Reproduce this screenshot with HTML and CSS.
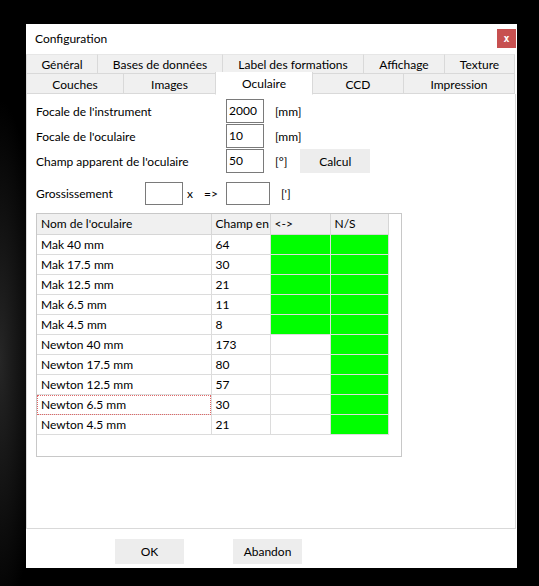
FILE: index.html
```html
<!DOCTYPE html>
<html>
<head>
    <title>Configuration</title>
    <link rel="stylesheet" href="styles.css">
</head>
<body>
    <div class="window">
        <div class="titlebar">
            <span class="title">Configuration</span>
            <span class="close">x</span>
        </div>

        <div class="tabs">
            <div class="tab-row row-top">
                <div class="tab">Général</div>
                <div class="tab">Bases de données</div>
                <div class="tab">Label des formations</div>
                <div class="tab">Affichage</div>
                <div class="tab">Texture</div>
            </div>
            <div class="tab-row row-bottom">
                <div class="tab">Couches</div>
                <div class="tab">Images</div>
                <div class="tab active">Oculaire</div>
                <div class="tab">CCD</div>
                <div class="tab">Impression</div>
            </div>
        </div>

        <div class="panel">
            <div class="fields">
                <div class="field">
                    <span class="label">Focale de l'instrument</span>
                    <span class="box">2000</span>
                    <span class="unit">[mm]</span>
                </div>
                <div class="field">
                    <span class="label">Focale de l'oculaire</span>
                    <span class="box">10</span>
                    <span class="unit">[mm]</span>
                </div>
                <div class="field">
                    <span class="label">Champ apparent de l'oculaire</span>
                    <span class="box">50</span>
                    <span class="unit">[°]</span>
                    <span class="btn calc">Calcul</span>
                </div>
            </div>

            <div class="zoom-row">
                <span class="zoom-label">Grossissement</span>
                <span class="box"></span>
                <span class="times">x</span>
                <span class="arrow">=&gt;</span>
                <span class="box wide"></span>
                <span class="unit">[']</span>
            </div>

            <div class="grid">
                <table>
                    <colgroup>
                        <col class="c-name">
                        <col class="c-field">
                        <col class="c-flip">
                        <col class="c-ns">
                    </colgroup>
                    <thead>
                        <tr><th>Nom de l'oculaire</th><th>Champ en</th><th>&lt;-&gt;</th><th>N/S</th></tr>
                    </thead>
                    <tbody>
                        <tr><td>Mak 40 mm</td><td>64</td><td class="on"></td><td class="on"></td></tr>
                        <tr><td>Mak 17.5 mm</td><td>30</td><td class="on"></td><td class="on"></td></tr>
                        <tr><td>Mak 12.5 mm</td><td>21</td><td class="on"></td><td class="on"></td></tr>
                        <tr><td>Mak 6.5 mm</td><td>11</td><td class="on"></td><td class="on"></td></tr>
                        <tr><td>Mak 4.5 mm</td><td>8</td><td class="on"></td><td class="on"></td></tr>
                        <tr><td>Newton 40 mm</td><td>173</td><td></td><td class="on"></td></tr>
                        <tr><td>Newton 17.5 mm</td><td>80</td><td></td><td class="on"></td></tr>
                        <tr><td>Newton 12.5 mm</td><td>57</td><td></td><td class="on"></td></tr>
                        <tr><td class="focus">Newton 6.5 mm</td><td>30</td><td></td><td class="on"></td></tr>
                        <tr><td>Newton 4.5 mm</td><td>21</td><td></td><td class="on"></td></tr>
                    </tbody>
                </table>
            </div>
        </div>

        <div class="footer">
            <span class="btn ok">OK</span>
            <span class="btn cancel">Abandon</span>
        </div>
    </div>
</body>
</html>
```

FILE: styles.css
```css
body {
    margin: 0;
    padding: 24px 0 0 26px;
    height: 586px;
    box-sizing: border-box;
    background-color: #000;
    background-image: radial-gradient(ellipse 40px 260px at 0 360px, #262626, rgba(0, 0, 0, 0));
    font-family: Lato, "Noto Sans", sans-serif;
    font-size: 12px;
    color: #000;
    overflow: hidden;
}

.window {
    width: 491px;
    height: 544px;
    background-color: #fff;
    display: flex;
    flex-direction: column;
}

/* title bar */
.titlebar {
    height: 30px;
    display: flex;
    align-items: center;
    justify-content: space-between;
    padding: 0 1px 0 9px;
}

.title {
    font-size: 12px;
    margin-top: -2px;
}

.close {
    width: 19px;
    height: 19px;
    margin-top: -2px;
    background-color: #c75050;
    color: #fff;
    font-family: "DejaVu Sans Mono", monospace;
    font-size: 10px;
    font-weight: bold;
    display: flex;
    align-items: center;
    justify-content: center;
}

/* tabs */
.tab-row {
    display: grid;
    height: 20px;
}

.row-top {
    grid-template-columns: 72px 125px 141px 81px 70px;
}

.row-bottom {
    grid-template-columns: 98px 92px 97px 91px 111px;
}

.tab {
    box-sizing: border-box;
    height: 20px;
    padding-top: 2px;
    background-color: #f0f0f0;
    border-right: 1px solid #d9d9d9;
    border-bottom: 1px solid #d9d9d9;
    display: flex;
    align-items: center;
    justify-content: center;
    line-height: 1;
}

.row-top .tab {
    border-top: 1px solid #e6e6e6;
}

.tab:first-child {
    border-left: 1px solid #d9d9d9;
}

.tab.active {
    position: relative;
    z-index: 1;
    background-color: #fff;
    border-bottom-color: #fff;
    border-left: 1px solid #d9d9d9;
    margin-left: -1px;
    margin-top: -2px;
    height: 23px;
    align-items: flex-start;
    padding-top: 6px;
}

/* page content */
.panel {
    box-sizing: border-box;
    height: 435px;
    border: 1px solid #d9d9d9;
    border-top: none;
    margin-right: 1px;
    padding: 5px 0 0 9px;
}

.fields {
    display: flex;
    flex-direction: column;
    gap: 1px;
}

.field,
.zoom-row {
    display: flex;
    align-items: center;
    height: 24px;
}

.label {
    width: 190px;
}

.box {
    box-sizing: border-box;
    width: 38px;
    height: 24px;
    border: 1px solid #7a7a7a;
    padding: 3px 0 0 2px;
    background-color: #fff;
}

.box.wide {
    width: 44px;
}

.unit {
    margin-left: 11px;
}

.btn {
    box-sizing: border-box;
    width: 70px;
    height: 24px;
    background-color: #ededed;
    display: flex;
    align-items: center;
    justify-content: center;
}

.calc {
    margin-left: 13px;
}

.zoom-row {
    margin-top: 9px;
    height: 23px;
}

.zoom-row .box {
    height: 23px;
}

.zoom-label {
    width: 109px;
}

.times {
    margin-left: 4px;
}

.arrow {
    margin-left: 11px;
    margin-right: 8px;
}

/* eyepiece list */
.grid {
    box-sizing: border-box;
    width: 366px;
    height: 244px;
    margin-top: 8px;
    border: 1px solid #c8c8c8;
}

table {
    border-collapse: collapse;
    table-layout: fixed;
    width: 351px;
}

.c-name { width: 174px; }
.c-field { width: 59px; }
.c-flip { width: 60px; }
.c-ns { width: 58px; }

th,
td {
    height: 19px;
    padding: 0 3px 0 4px;
    border: 1px solid #dcdcdc;
    text-align: left;
    font-weight: normal;
    white-space: nowrap;
    overflow: hidden;
    line-height: 1;
}

th {
    background-color: #f0f0f0;
    border-color: #d6d6d6;
}

tr > :first-child {
    border-left: none;
}

thead th {
    height: 20px;
    border-top: none;
}

td.on {
    background-color: #00ff00;
}

td.focus {
    outline: 1px dotted #e06666;
    outline-offset: -1px;
}

/* bottom buttons */
.footer {
    display: flex;
    gap: 49px;
    padding: 10px 0 0 89px;
}

.footer .btn {
    width: 69px;
    height: 25px;
}
```
